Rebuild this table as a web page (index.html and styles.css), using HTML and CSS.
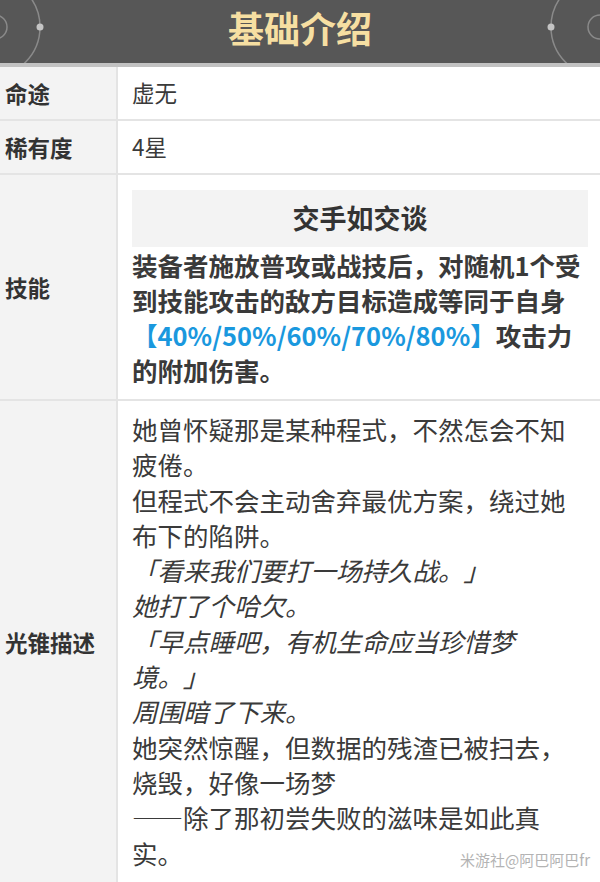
FILE: index.html
```html
<!DOCTYPE html>
<html lang="zh-CN">
  <head>
    <meta charset="UTF-8" />
    <meta name="viewport" content="width=device-width, initial-scale=1.0" />
    <title>基础介绍</title>
    <link rel="stylesheet" href="styles.css">
  </head>
  <body>
    <div class="card">
      <div class="header">
        <svg class="header-deco" width="600" height="63" viewBox="0 0 600 63">
          <circle cx="-10" cy="27" r="50" fill="none" stroke="#8a8a8a" stroke-width="1.5" />
          <circle cx="-5" cy="27" r="12" fill="none" stroke="#8a8a8a" stroke-width="1.5" />
          <circle cx="40" cy="27" r="3.5" fill="#c4c4c4" />
          <circle cx="601" cy="27" r="50" fill="none" stroke="#8a8a8a" stroke-width="1.5" />
          <circle cx="600" cy="27" r="12" fill="none" stroke="#8a8a8a" stroke-width="1.5" />
          <circle cx="551" cy="27" r="3.5" fill="#c4c4c4" />
        </svg>
        <h2 class="header-title">基础介绍</h2>
      </div>

      <table class="info">
        <tr>
          <th>命途</th>
          <td class="value">虚无</td>
        </tr>
        <tr>
          <th>稀有度</th>
          <td class="value">4星</td>
        </tr>
        <tr>
          <th>技能</th>
          <td class="skill">
            <div class="skill-name">交手如交谈</div>
            <div class="skill-desc">
              装备者施放普攻或战技后，对随机1个受到技能攻击的敌方目标造成等同于自身<span class="num">【40%/50%/60%/70%/80%】</span>攻击力的附加伤害。
            </div>
          </td>
        </tr>
        <tr>
          <th>光锥描述</th>
          <td class="story">
            她曾怀疑那是某种程式，不然怎会不知疲倦。<br>
            但程式不会主动舍弃最优方案，绕过她布下的陷阱。<br>
            <em>「看来我们要打一场持久战。」</em><br>
            <em>她打了个哈欠。</em><br>
            <em>「早点睡吧，有机生命应当珍惜梦境。」</em><br>
            <em>周围暗了下来。</em><br>
            她突然惊醒，但数据的残渣已被扫去，烧毁，好像一场梦<br>
            ——除了那初尝失败的滋味是如此真实。
          </td>
        </tr>
      </table>

      <div class="watermark">米游社@阿巴阿巴fr</div>
    </div>
  </body>
</html>
```

FILE: styles.css
```css
body {
  margin: 0;
  padding: 0;
  background-color: #ffffff;
  font-family: "Noto Sans CJK SC", "Noto Sans", sans-serif;
  color: #333333;
  text-spacing-trim: space-all;
}

.card {
  position: relative;
  width: 600px;
  height: 882px;
  overflow: hidden;
}

.header {
  position: relative;
  height: 63px;
  background-color: #575757;
  border-bottom: 4px solid #c2c2c2;
}

.header-deco {
  position: absolute;
  top: 0;
  left: 0;
}

.header-title {
  position: relative;
  margin: 0;
  text-align: center;
  line-height: 55px;
  font-size: 36px;
  font-weight: bold;
  color: #f6dfa2;
}

.info {
  width: 100%;
  border-collapse: collapse;
}

.info th,
.info td {
  border-bottom: 2px solid #e4e4e4;
  vertical-align: middle;
}

.info th {
  width: 111px;
  padding: 0 0 0 5px;
  background-color: #f3f3f3;
  border-right: 2px solid #e4e4e4;
  text-align: left;
  font-size: 22.5px;
  font-weight: bold;
  color: #333333;
}

.value {
  height: 30px;
  padding: 10px 12px 12px 14px;
  font-size: 22.5px;
  line-height: 30px;
  color: #3a3a3a;
}

.skill {
  padding: 15px 12px 12px 14px;
}

.skill-name {
  height: 57px;
  line-height: 56px;
  background-color: #f3f3f3;
  text-align: center;
  font-size: 27px;
  font-weight: bold;
  color: #333333;
}

.skill-desc {
  font-size: 25.5px;
  line-height: 35px;
  font-weight: bold;
  color: #3a3a3a;
}

.num {
  color: #1a98de;
}

.story {
  padding: 10px 12px 14px 14px;
  font-size: 25.5px;
  line-height: 35.3px;
  color: #3a3a3a;
}

.story em {
  font-style: italic;
}

.watermark {
  position: absolute;
  right: 10px;
  bottom: 12px;
  font-size: 15px;
  color: #b3b3b3;
}
```
